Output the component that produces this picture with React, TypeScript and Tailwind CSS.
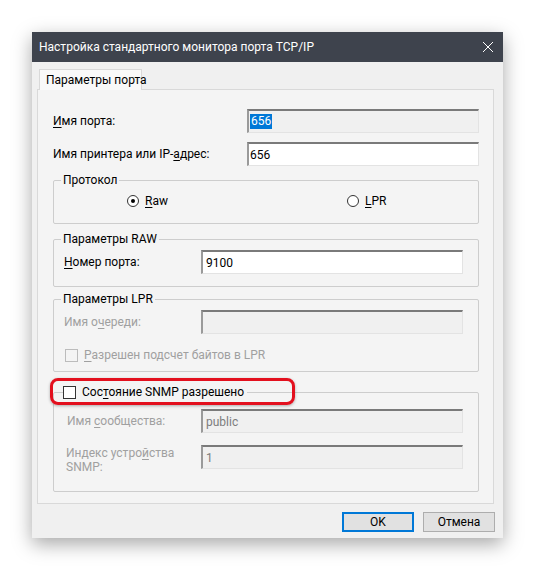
import React from "react";

function Key({ c }: { c: string }) {
  return <span className="underline decoration-1 underline-offset-[2px]">{c}</span>;
}

function Field({
  value,
  width,
  disabled,
  selected,
  pad,
}: {
  value?: string;
  width: string;
  disabled?: boolean;
  selected?: boolean;
  pad: string;
}) {
  return (
    <div
      className={`${width} ${pad} h-[24px] flex items-center border-t-2 border-l-2 border-b border-r border-t-[#7a7a7a] border-l-[#9a9a9a] border-b-[#e3e3e3] border-r-[#e3e3e3] ${
        disabled || selected ? "bg-[#f0f0f0]" : "bg-white"
      } ${disabled ? "text-[#7d7d7d]" : "text-black"}`}
    >
      {selected ? (
        <span className="bg-[#0078d7] text-white leading-[15px] px-[1px]">{value}</span>
      ) : (
        <span>{value}</span>
      )}
    </div>
  );
}

function Radio({ checked }: { checked?: boolean }) {
  return (
    <span className="w-[12px] h-[12px] rounded-full border border-[#333] bg-white flex items-center justify-center">
      {checked && <span className="w-[4px] h-[4px] rounded-full bg-black" />}
    </span>
  );
}

function Check({ disabled }: { disabled?: boolean }) {
  return (
    <span
      className={`w-[13px] h-[13px] border ${
        disabled ? "border-[#bcbcbc] bg-[#f4f4f4]" : "border-[#333] bg-white"
      }`}
    />
  );
}

const box = "border border-[#cdcdcd] rounded-[2px]";

export default function App() {
  return (
    <div className="w-[535px] h-[571px] bg-white pt-[32px] pl-[32px] [font-family:Roboto,'Noto_Sans',sans-serif] text-[12px] text-black">
      <div className="w-[471px] h-[506px] bg-[#f0f0f0] flex flex-col shadow-[0_6px_18px_rgba(0,0,0,0.35)]">
        {/* title bar */}
        <div className="h-[30px] shrink-0 bg-[#3e434d] flex items-center pl-[7px] pr-[10px] text-white">
          <span className="flex-1 whitespace-nowrap">Настройка стандартного монитора порта TCP/IP</span>
          <svg width="10" height="10" viewBox="0 0 10 10">
            <path d="M0 0L10 10M10 0L0 10" stroke="white" strokeWidth="1" />
          </svg>
        </div>

        <div className="pt-[7px] pl-[5px] pr-[8px]">
          <div className="relative z-10 -mb-px ml-[2px] w-[103px] h-[21px] border-t border-l border-r border-[#d9d9d9] bg-[#f9f9f9] flex items-center pl-[6px] whitespace-nowrap">
            Параметры порта
          </div>

          <div className="h-[415px] mr-[1px] border border-[#d9d9d9] bg-[#f4f4f4] pl-[15px] pr-[14px] pt-[19px] whitespace-nowrap">
            <div className="flex items-center h-[23px]">
              <span className="w-[194px]">
                <Key c="И" />мя порта:
              </span>
              <Field value="656" width="w-[232px]" pad="pl-[1px]" selected />
            </div>
            <div className="flex items-center mt-[10px]">
              <span className="w-[194px]">
                Имя принтера или IP-<Key c="а" />дрес:
              </span>
              <Field value="656" width="w-[232px]" pad="pl-[1px]" />
            </div>

            <fieldset className={`${box} mt-[6px]`}>
              <legend className="ml-[7px] px-[2px] leading-[16px]">Протокол</legend>
              <div className="pt-[5px] pb-[14px] pl-[73px] flex items-center h-[35px]">
                <span className="w-[220px] flex items-center gap-[6px]">
                  <Radio checked />
                  <span>
                    <Key c="R" />aw
                  </span>
                </span>
                <span className="flex items-center gap-[6px]">
                  <Radio />
                  <span>
                    <Key c="L" />PR
                  </span>
                </span>
              </div>
            </fieldset>

            <fieldset className={`${box} mt-[7px]`}>
              <legend className="ml-[7px] px-[2px] leading-[16px]">Параметры RAW</legend>
              <div className="pt-[3px] pb-[12px] flex items-center">
                <span className="w-[147px] pl-[10px]">
                  <Key c="Н" />омер порта:
                </span>
                <Field value="9100" width="w-[262px]" pad="pl-[3px]" />
              </div>
            </fieldset>

            <fieldset className={`${box} mt-[4px]`}>
              <legend className="ml-[7px] px-[2px] leading-[16px]">Параметры LPR</legend>
              <div className="pt-[3px] flex items-center">
                <span className="w-[147px] pl-[10px] text-[#a0a0a0]">
                  Имя о<Key c="ч" />ереди:
                </span>
                <Field width="w-[262px]" pad="pl-[3px]" disabled />
              </div>
              <div className="mt-[13px] mb-[8px] h-[16px] pl-[11px] flex items-center gap-[6px] text-[#a0a0a0]">
                <Check disabled />
                <span>
                  <Key c="Р" />азрешен подсчет байтов в LPR
                </span>
              </div>
            </fieldset>

            <div className="relative mt-[12px]">
              <fieldset className={box}>
                <legend className="ml-[9px] pr-[3px] leading-[16px]">
                  <span className="flex items-center gap-[6px]">
                    <Check />
                    <span>
                      Сос<Key c="т" />ояние SNMP разрешено
                    </span>
                  </span>
                </legend>
                <div className="pt-[9px] flex items-center">
                  <span className="w-[147px] pl-[13px] text-[#a0a0a0]">
                    Имя <Key c="с" />ообщества:
                  </span>
                  <Field value="public" width="w-[262px]" pad="pl-[3px]" disabled />
                </div>
                <div className="mt-[12px] mb-[17px] flex items-start">
                  <span className="w-[147px] pl-[12px] pt-[1px] leading-[14px] text-[#a0a0a0] flex flex-col">
                    <span>
                      Индекс устро<Key c="й" />ства
                    </span>
                    <span>SNMP:</span>
                  </span>
                  <Field value="1" width="w-[262px]" pad="pl-[3px]" disabled />
                </div>
              </fieldset>
              <div className="pointer-events-none absolute left-[-3px] top-[-6px] w-[245px] h-[27px] border-[3px] border-[#e3101e] rounded-[8px] shadow-[0_1px_3px_rgba(0,0,0,0.3)]" />
            </div>
          </div>

          <div className="mt-[8px] flex justify-end gap-[9px]">
            <button className="w-[72px] h-[20px] border-2 border-[#0078d7] bg-[#e1e1e1] flex items-center justify-center">
              OK
            </button>
            <button className="w-[72px] h-[20px] border border-[#adadad] bg-[#e1e1e1] flex items-center justify-center">
              Отмена
            </button>
          </div>
        </div>
      </div>
    </div>
  );
}
